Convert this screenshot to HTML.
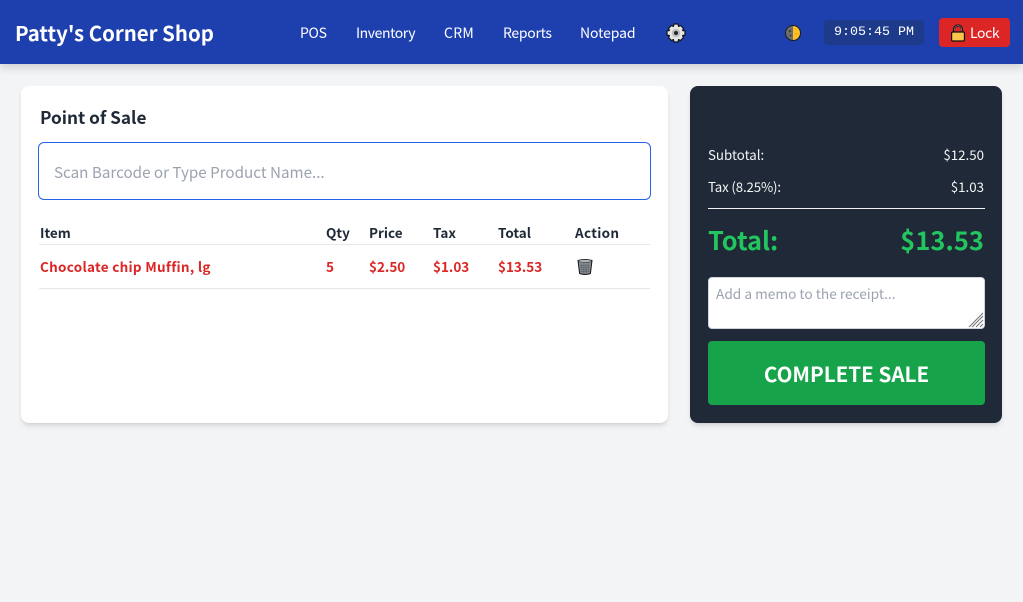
<!DOCTYPE html>
<html><head><meta charset="utf-8"><style>
*{box-sizing:border-box}
html,body{margin:0;padding:0;width:1023px;height:602px;overflow:hidden;background:#f3f4f6}
body{position:relative;font-family:"Noto Sans CJK SC","Liberation Sans",sans-serif;color:#1f2937}
.t{position:absolute;white-space:nowrap;line-height:20px;height:20px}
.r{text-align:right}
.box{position:absolute}
.b{font-weight:700}
.red{color:#dc2626;font-weight:700;font-size:13.5px}
.th{font-weight:700;font-size:13.5px;color:#1f2937}
.nav{color:#fff;font-size:14px}
svg{position:absolute;display:block}
</style></head><body>
<div class="box" style="left:0;top:0;width:1023px;height:64px;background:#1e40af;box-shadow:0 4px 8px rgba(0,0,0,.14)"></div>
<div class="t b" style="left:15px;top:22px;color:#fff;font-size:20.4px">Patty's Corner Shop</div>
<div class="t nav" style="left:300px;top:22.5px;letter-spacing:-.3px">POS</div>
<div class="t nav" style="left:356px;top:22.5px;letter-spacing:-.42px">Inventory</div>
<div class="t nav" style="left:444px;top:22.5px;letter-spacing:.3px">CRM</div>
<div class="t nav" style="left:503px;top:22.5px;letter-spacing:-.3px">Reports</div>
<div class="t nav" style="left:580px;top:22.5px;letter-spacing:-.1px">Notepad</div>
<svg style="left:666px;top:23px" width="20" height="20" viewBox="0 0 20 20"><path d="M8 1h4l.6 2.4 2-.9 2.9 2.9-.9 2 2.4.6v4l-2.4.6.9 2-2.9 2.9-2-.9L12 19H8l-.6-2.4-2 .9-2.9-2.9.9-2L1 12V8l2.4-.6-.9-2 2.9-2.9 2 .9z" fill="#e5e5e5" stroke="#111" stroke-width="1.2" stroke-linejoin="round"/><circle cx="10" cy="10" r="4.2" fill="#bdbdbd"/><circle cx="10" cy="10" r="2" fill="#222"/></svg>
<svg style="left:785px;top:25px" width="16" height="16" viewBox="0 0 16 16"><circle cx="8" cy="8" r="8" fill="#1a1a1a"/><path d="M8 1A7 7 0 0 0 8 15z" fill="#6f6f6f"/><path d="M8 1A7 7 0 0 1 8 15z" fill="#fbbf24"/><circle cx="5" cy="6" r="1.3" fill="#444"/><circle cx="5.5" cy="10.5" r="1.1" fill="#444"/><circle cx="11" cy="9" r=".8" fill="#e39e0c"/></svg>
<div class="box" style="left:824px;top:20px;width:100px;height:25px;background:#1e3a8a;border-radius:4px"></div>
<div class="t" style="left:824px;top:23px;width:100px;text-align:center;color:#fff;font:13.33px/20px 'Liberation Mono',monospace">9:05:45 PM</div>
<div class="box" style="left:939px;top:18px;width:71px;height:29px;background:#dc2626;border-radius:4px"></div>
<svg style="left:950px;top:24px" width="16" height="18" viewBox="0 0 16 18"><path d="M4 9V5.5a4 4 0 0 1 8 0V9" fill="none" stroke="#111" stroke-width="2.2"/><path d="M4.2 8V5.5a3.8 3.8 0 0 1 7.6 0V8" fill="none" stroke="#bbb" stroke-width=".5"/><rect x="1.6" y="8" width="12.8" height="9" rx="1.2" fill="#fcc64a" stroke="#111" stroke-width="1.2"/></svg>
<div class="t" style="left:970px;top:23px;color:#fff;font-size:14px;letter-spacing:-.4px">Lock</div>

<div class="box" style="left:21px;top:86px;width:647px;height:337px;background:#fff;border-radius:8px;box-shadow:0 4px 6px -1px rgba(0,0,0,.1),0 2px 4px -2px rgba(0,0,0,.1)"></div>
<div class="t b" style="left:40px;top:107px;font-size:17.2px;color:#1f2937">Point of Sale</div>
<div class="box" style="left:38px;top:142px;width:613px;height:58px;border:1px solid #2563eb;border-radius:6px;background:#fff"></div>
<div class="t" style="left:54px;top:162px;font-size:15.2px;color:#9ca3af">Scan Barcode or Type Product Name...</div>
<div class="t th" style="left:40px;top:222px">Item</div>
<div class="t th" style="left:326px;top:222px">Qty</div>
<div class="t th" style="left:369px;top:222px">Price</div>
<div class="t th" style="left:433px;top:222px">Tax</div>
<div class="t th" style="left:498px;top:222px">Total</div>
<div class="t th" style="left:575px;top:222px;letter-spacing:.3px">Action</div>
<div class="box" style="left:39px;top:244px;width:611px;height:1px;background:#e5e7eb"></div>
<div class="t red" style="left:40px;top:256px;letter-spacing:.28px">Chocolate chip Muffin, lg</div>
<div class="t red" style="left:326px;top:256px">5</div>
<div class="t red" style="left:369px;top:256px">$2.50</div>
<div class="t red" style="left:433px;top:256px">$1.03</div>
<div class="t red" style="left:498px;top:256px">$13.53</div>
<svg style="left:576px;top:258px" width="18" height="18" viewBox="0 0 18 18"><path d="M2 2.5Q9 .5 16 2.5L14.4 15.5Q9 17.5 3.6 15.5z" fill="#8a8f95" stroke="#111" stroke-width="1" stroke-linejoin="round"/><ellipse cx="9" cy="3" rx="6.6" ry="1.4" fill="#b0b4b9" stroke="#333" stroke-width=".6"/><path d="M5 5.5l1 9M7 5.5l.4 10M9 5.5v10M11 5.5l-.4 10M13 5.5l-1 9M4 7.5h10M4 9.5h10M4.3 11.5h9.4M4.5 13.5h9" stroke="#565b62" stroke-width=".5" fill="none"/></svg>
<div class="box" style="left:39px;top:288px;width:611px;height:1px;background:#e5e7eb"></div>

<div class="box" style="left:690px;top:86px;width:312px;height:337px;background:#1f2937;border-radius:8px;box-shadow:0 4px 6px -1px rgba(0,0,0,.1),0 2px 4px -2px rgba(0,0,0,.1)"></div>
<div class="t" style="left:708px;top:145px;color:#f3f4f6;font-size:13.3px">Subtotal:</div>
<div class="t r" style="right:39px;top:145px;color:#f3f4f6;font-size:13.3px">$12.50</div>
<div class="t" style="left:708px;top:177px;color:#f3f4f6;font-size:13.3px;letter-spacing:-.15px">Tax (8.25%):</div>
<div class="t r" style="right:39px;top:177px;color:#f3f4f6;font-size:13.3px">$1.03</div>
<div class="box" style="left:708px;top:208px;width:277px;height:1px;background:#f3f4f6"></div>
<div class="t b" style="left:708px;top:230px;color:#22c55e;font-size:25.4px">Total:</div>
<div class="t b r" style="right:39px;top:230px;color:#22c55e;font-size:25.4px;letter-spacing:.1px">$13.53</div>
<div class="box" style="left:708px;top:277px;width:277px;height:52px;background:#fff;border:1px solid #d1d5db;border-radius:4px"></div>
<div class="t" style="left:716px;top:283px;color:#9ca3af;font-size:13.7px">Add a memo to the receipt...</div>
<svg style="left:968px;top:312px" width="16" height="16" viewBox="0 0 16 16"><path d="M1 15L15 1M4 15L15 4M8 15l7-7M12 15l3-3" stroke="#777" stroke-width="1.1" fill="none"/></svg>
<div class="box" style="left:708px;top:341px;width:277px;height:64px;background:#16a34a;border-radius:4px"></div>
<div class="t b" style="left:708px;top:363px;width:277px;text-align:center;color:#fff;font-size:20.6px">COMPLETE SALE</div>
</body></html>
